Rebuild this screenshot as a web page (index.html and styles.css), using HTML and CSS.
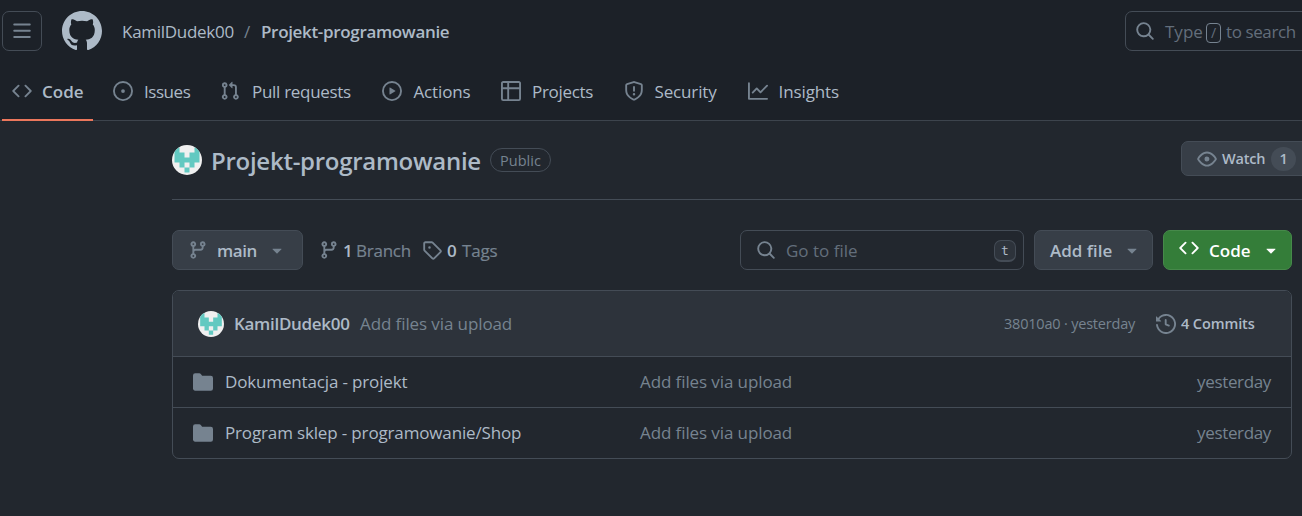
FILE: index.html
```
<!DOCTYPE html>
<html lang="en">
<head>
<meta charset="utf-8">
<title>KamilDudek00/Projekt-programowanie</title>
<link rel="stylesheet" href="styles.css">
</head>
<body>
<svg class="defs" width="0" height="0">
  <symbol id="i-branch" viewBox="0 0 16 16"><path d="M9.5 3.25a2.25 2.25 0 1 1 3 2.122V6A2.5 2.5 0 0 1 10 8.5H6a1 1 0 0 0-1 1v1.128a2.251 2.251 0 1 1-1.5 0V5.372a2.25 2.25 0 1 1 1.5 0v1.836A2.493 2.493 0 0 1 6 7h4a1 1 0 0 0 1-1v-.628A2.25 2.25 0 0 1 9.5 3.25Zm-6 0a.75.75 0 1 0 1.5 0 .75.75 0 0 0-1.5 0Zm8.25-.75a.75.75 0 1 0 0 1.5.75.75 0 0 0 0-1.5ZM4.25 12a.75.75 0 1 0 0 1.5.75.75 0 0 0 0-1.5Z"/></symbol>
  <symbol id="i-code" viewBox="0 0 16 16"><path d="m11.28 3.22 4.25 4.25a.75.75 0 0 1 0 1.06l-4.25 4.25a.749.749 0 0 1-1.275-.326.749.749 0 0 1 .215-.734L13.94 8l-3.72-3.72a.749.749 0 0 1 .326-1.275.749.749 0 0 1 .734.215Zm-6.56 0a.751.751 0 0 1 1.042.018.751.751 0 0 1 .018 1.042L2.06 8l3.72 3.72a.749.749 0 0 1-.326 1.275.749.749 0 0 1-.734-.215L.47 8.53a.75.75 0 0 1 0-1.06Z"/></symbol>
  <symbol id="i-search" viewBox="0 0 16 16"><path d="M10.68 11.74a6 6 0 0 1-7.922-8.982 6 6 0 0 1 8.982 7.922l3.04 3.04a.749.749 0 0 1-.326 1.275.749.749 0 0 1-.734-.215ZM11.5 7a4.499 4.499 0 1 0-8.997 0A4.499 4.499 0 0 0 11.5 7Z"/></symbol>
  <symbol id="i-caret" viewBox="0 0 16 16"><path d="m4.427 7.427 3.396 3.396a.25.25 0 0 0 .354 0l3.396-3.396A.25.25 0 0 0 11.396 7H4.604a.25.25 0 0 0-.177.427Z"/></symbol>
  <symbol id="i-folder" viewBox="0 0 16 16"><path d="M1.75 1A1.75 1.75 0 0 0 0 2.75v10.5C0 14.216.784 15 1.75 15h12.5A1.75 1.75 0 0 0 16 13.25v-8.5A1.75 1.75 0 0 0 14.25 3H7.5a.25.25 0 0 1-.2-.1l-.9-1.2C6.07 1.26 5.55 1 5 1H1.75Z"/></symbol>
  <symbol id="i-avatar" viewBox="0 0 30 30"><rect width="30" height="30" fill="#f0f0f0"/><path fill="#62c9c1" d="M2.500 2.500h5v5h5v5h5v-5h5v-5h5v15h-5v5h-5v-5h-5v5h-5v-5h-5zM12.500 22.500h5v5h-5z"/></symbol>
</svg>

<header class="top">
  <div class="global">
    <button class="menu" aria-label="Menu"><svg class="ic" viewBox="0 0 16 16"><path d="M1 2.75A.75.75 0 0 1 1.75 2h12.5a.75.75 0 0 1 0 1.500H1.750A.75.75 0 0 1 1 2.750Zm0 5A.75.75 0 0 1 1.750 7h12.500a.75.75 0 0 1 0 1.500H1.750A.75.75 0 0 1 1 7.750ZM1.750 12h12.500a.75.75 0 0 1 0 1.500H1.750a.75.75 0 0 1 0-1.500Z"/></svg></button>
    <svg class="logo" viewBox="0 0 16 16"><path d="M8 0c4.42 0 8 3.58 8 8a8.013 8.013 0 0 1-5.45 7.590c-.4.080-.55-.170-.55-.380 0-.270.010-1.130.010-2.200 0-.750-.250-1.230-.540-1.480 1.780-.200 3.650-.880 3.650-3.950 0-.880-.310-1.590-.820-2.150.080-.200.360-1.020-.080-2.120 0 0-.670-.220-2.200.820-.640-.180-1.320-.270-2-.270-.680 0-1.360.090-2 .270-1.530-1.030-2.200-.820-2.200-.820-.440 1.100-.160 1.920-.080 2.120-.510.560-.820 1.280-.820 2.150 0 3.060 1.860 3.750 3.640 3.950-.230.200-.440.550-.510 1.070-.460.210-1.610.550-2.330-.660-.150-.240-.600-.830-1.230-.820-.670.010-.270.380.010.530.340.190.730.900.820 1.130.160.450.680 1.310 2.690.940 0 .670.010 1.300.010 1.490 0 .210-.150.450-.550.380A7.995 7.995 0 0 1 0 8c0-4.420 3.580-8 8-8Z"/></svg>
    <nav class="crumbs"><span class="owner">KamilDudek00</span><span class="slash">/</span><b class="repo">Projekt-programowanie</b></nav>
    <div class="search"><svg class="ic"><use href="#i-search"/></svg><span class="s1">Type</span><kbd class="key-slash">/</kbd><span class="s2">to search</span></div>
  </div>
  <nav class="tabs">
    <a class="tab active"><svg class="ic"><use href="#i-code"/></svg><span class="t-code">Code</span></a>
    <a class="tab"><svg class="ic" viewBox="0 0 16 16"><path d="M8 9.500a1.500 1.500 0 1 0 0-3 1.500 1.500 0 0 0 0 3Z"/><path d="M8 0a8 8 0 1 1 0 16A8 8 0 0 1 8 0ZM1.500 8a6.500 6.500 0 1 0 13 0 6.500 6.500 0 0 0-13 0Z"/></svg><span class="t-issues">Issues</span></a>
    <a class="tab"><svg class="ic" viewBox="0 0 16 16"><path d="M1.500 3.250a2.250 2.250 0 1 1 3 2.122v5.256a2.251 2.251 0 1 1-1.500 0V5.372A2.250 2.250 0 0 1 1.500 3.250Zm5.677-.177L9.573.677A.250.250 0 0 1 10 .854V2.500h1A2.500 2.500 0 0 1 13.500 5v5.628a2.251 2.251 0 1 1-1.500 0V5a1 1 0 0 0-1-1h-1v1.646a.250.250 0 0 1-.427.177L7.177 3.427a.250.250 0 0 1 0-.354ZM3.750 2.500a.750.750 0 1 0 0 1.500.750.750 0 0 0 0-1.500Zm0 9.500a.750.750 0 1 0 0 1.500.750.750 0 0 0 0-1.500Zm8.250.750a.750.750 0 1 0 1.500 0 .750.750 0 0 0-1.500 0Z"/></svg><span class="t-pulls">Pull requests</span></a>
    <a class="tab"><svg class="ic" viewBox="0 0 16 16"><path d="M8 0a8 8 0 1 1 0 16A8 8 0 0 1 8 0ZM1.500 8a6.500 6.500 0 1 0 13 0 6.500 6.500 0 0 0-13 0Zm4.879-2.773 4.264 2.559a.250.250 0 0 1 0 .428l-4.264 2.559A.250.250 0 0 1 6 10.559V5.442a.250.250 0 0 1 .379-.215Z"/></svg><span class="t-actions">Actions</span></a>
    <a class="tab"><svg class="ic" viewBox="0 0 16 16"><path d="M0 1.750C0 .784.784 0 1.750 0h12.500C15.216 0 16 .784 16 1.750v12.500A1.750 1.750 0 0 1 14.250 16H1.750A1.750 1.750 0 0 1 0 14.250ZM6.500 6.500v8h7.750a.250.250 0 0 0 .250-.250V6.500Zm8-1.500V1.750a.250.250 0 0 0-.250-.250H6.500V5Zm-13 1.500v7.750c0 .138.112.250.250.250H5v-8ZM5 5V1.500H1.750a.250.250 0 0 0-.250.250V5Z"/></svg><span class="t-projects">Projects</span></a>
    <a class="tab"><svg class="ic" viewBox="0 0 16 16"><path d="M7.467.133a1.748 1.748 0 0 1 1.066 0l5.250 1.680A1.750 1.750 0 0 1 15 3.480V7c0 1.566-.320 3.182-1.303 4.682-.983 1.498-2.585 2.813-5.032 3.855a1.697 1.697 0 0 1-1.330 0c-2.447-1.042-4.049-2.357-5.032-3.855C1.320 10.182 1 8.566 1 7V3.480a1.750 1.750 0 0 1 1.217-1.667Zm.610 1.429a.250.250 0 0 0-.153 0l-5.250 1.680a.250.250 0 0 0-.174.238V7c0 1.358.275 2.666 1.057 3.860.784 1.194 2.121 2.340 4.366 3.297a.196.196 0 0 0 .154 0c2.245-.956 3.582-2.104 4.366-3.298C13.225 9.666 13.500 8.360 13.500 7V3.480a.251.251 0 0 0-.174-.237l-5.250-1.680ZM8.750 4.750v3a.750.750 0 0 1-1.500 0v-3a.750.750 0 0 1 1.500 0ZM9 10.500a1 1 0 1 1-2 0 1 1 0 0 1 2 0Z"/></svg><span class="t-security">Security</span></a>
    <a class="tab"><svg class="ic" viewBox="0 0 16 16"><path d="M1.500 1.750V13.500h13.750a.750.750 0 0 1 0 1.500H.750a.750.750 0 0 1-.750-.750V1.750a.750.750 0 0 1 1.500 0Zm14.280 2.530-5.250 5.250a.750.750 0 0 1-1.060 0L7 7.060 4.280 9.780a.751.751 0 0 1-1.042-.018.751.751 0 0 1-.018-1.042l3.250-3.250a.750.750 0 0 1 1.060 0L10 7.940l4.720-4.720a.751.751 0 0 1 1.042.018.751.751 0 0 1 .018 1.042Z"/></svg><span class="t-insights">Insights</span></a>
  </nav>
</header>

<main class="page">
  <section class="title">
    <svg class="avatar big"><use href="#i-avatar"/></svg>
    <h1 class="name">Projekt-programowanie</h1>
    <span class="public">Public</span>
    <button class="watch"><svg class="ic" viewBox="0 0 16 16"><path d="M8 2c1.981 0 3.671.992 4.933 2.078 1.270 1.091 2.187 2.345 2.637 3.023a1.620 1.620 0 0 1 0 1.798c-.450.678-1.367 1.932-2.637 3.023C11.670 13.008 9.981 14 8 14c-1.981 0-3.671-.992-4.933-2.078C1.797 10.830.880 9.576.430 8.898a1.620 1.620 0 0 1 0-1.798c.450-.677 1.367-1.931 2.637-3.022C4.330 2.992 6.019 2 8 2ZM1.679 7.932a.120.120 0 0 0 0 .136c.411.622 1.241 1.750 2.366 2.717C5.176 11.758 6.527 12.500 8 12.500c1.473 0 2.825-.742 3.955-1.715 1.124-.967 1.954-2.096 2.366-2.717a.120.120 0 0 0 0-.136c-.412-.621-1.242-1.750-2.366-2.717C10.824 4.242 9.473 3.500 8 3.500c-1.473 0-2.825.742-3.955 1.715-1.124.967-1.954 2.096-2.366 2.717ZM8 10a2 2 0 1 1-.001-3.999A2 2 0 0 1 8 10Z"/></svg><span class="watch-t">Watch</span><span class="count">1</span></button>
  </section>

  <section class="bar">
    <button class="btn branch"><svg class="ic"><use href="#i-branch"/></svg><span class="main-t">main</span><svg class="ic"><use href="#i-caret"/></svg></button>
    <a class="stat branches"><svg class="ic"><use href="#i-branch"/></svg><b>1</b><span class="branch-t">Branch</span></a>
    <a class="stat tags"><svg class="ic" viewBox="0 0 16 16"><path d="M1 7.775V2.750C1 1.784 1.784 1 2.750 1h5.025c.464 0 .910.184 1.238.513l6.250 6.250a1.750 1.750 0 0 1 0 2.474l-5.026 5.026a1.750 1.750 0 0 1-2.474 0l-6.250-6.250A1.752 1.752 0 0 1 1 7.775Zm1.500 0c0 .066.026.130.073.177l6.250 6.250a.250.250 0 0 0 .354 0l5.025-5.025a.250.250 0 0 0 0-.354l-6.250-6.250a.250.250 0 0 0-.177-.073H2.750a.250.250 0 0 0-.250.250ZM6 5a1 1 0 1 1 0 2 1 1 0 0 1 0-2Z"/></svg><b>0</b><span class="tags-t">Tags</span></a>
    <div class="goto"><svg class="ic"><use href="#i-search"/></svg><span class="goto-t">Go to file</span><kbd class="key-t">t</kbd></div>
    <button class="btn add"><span class="add-t">Add file</span><svg class="ic"><use href="#i-caret"/></svg></button>
    <button class="btn green"><svg class="ic up"><use href="#i-code"/></svg><span class="code-t">Code</span><svg class="ic"><use href="#i-caret"/></svg></button>
  </section>

  <section class="files">
    <div class="commit">
      <svg class="avatar small" viewBox="0 0 30 30"><use href="#i-avatar" width="30" height="30"/></svg>
      <b class="author">KamilDudek00</b><span class="msg">Add files via upload</span>
      <span class="sha">38010a0 · yesterday</span>
      <svg class="ic" viewBox="0 0 16 16"><path d="m.427 1.927 1.215 1.215a8.002 8.002 0 1 1-1.600 5.685.750.750 0 1 1 1.493-.154 6.500 6.500 0 1 0 1.180-4.458l1.358 1.358A.250.250 0 0 1 3.896 6H.250A.250.250 0 0 1 0 5.750V2.104a.250.250 0 0 1 .427-.177ZM7.750 4a.750.750 0 0 1 .750.750v2.992l2.028.812a.750.750 0 0 1-.557 1.392l-2.500-1A.751.751 0 0 1 7 8.250v-3.500A.750.750 0 0 1 7.750 4Z"/></svg>
      <b class="commits">4 Commits</b>
    </div>
    <div class="row"><svg class="ic"><use href="#i-folder"/></svg><span class="file">Dokumentacja - projekt</span><span class="msg">Add files via upload</span><span class="when">yesterday</span></div>
    <div class="row"><svg class="ic"><use href="#i-folder"/></svg><span class="file">Program sklep - programowanie/Shop</span><span class="msg">Add files via upload</span><span class="when">yesterday</span></div>
  </section>
</main>
</body>
</html>
```

FILE: styles.css
```
* { box-sizing: border-box; }
body { margin: 0; height: 516px; overflow: hidden; background: #22272e; color: #adbac7; font: 17px/26px "Open Sans", "Noto Sans", sans-serif; white-space: nowrap; }
button, kbd { font: inherit; color: inherit; margin: 0; padding: 0; }
b { font-weight: 600; }
svg { flex: none; fill: currentColor; }
.defs { position: absolute; }
.ic { width: 20px; height: 20px; color: #768390; }

.top { background: #1c2128; height: 121px; border-bottom: 1px solid #3d444d; }
.global { display: flex; align-items: center; height: 51px; padding: 11px 0 0 2px; }
.menu { width: 40px; height: 40px; display: grid; place-items: center; background: none; border: 1px solid #444c56; border-radius: 7px; margin-right: 20px; }
.logo { width: 40px; height: 40px; margin-right: 20px; }
.crumbs { display: flex; padding-top: 2px; }
.owner { width: 122px; letter-spacing: -.28px; }
.slash { width: 17px; color: #768390; }
.repo { letter-spacing: -.33px; }
.search { display: flex; align-items: center; width: 200px; height: 40px; margin-left: auto; margin-right: -23px; padding-left: 9px; border: 1px solid #444c56; border-radius: 7px; color: #636e7b; }
.s1 { width: 41px; margin-left: 10px; padding-top: 2px; }
.key-slash { width: 15px; height: 20px; border: 1px solid #768390; border-radius: 4px; font-size: 14px; line-height: 18px; text-align: center; margin: 3px 5px 0 0; }
.s2 { padding-top: 2px; letter-spacing: -.4px; }

.tabs { display: flex; gap: 10px; height: 70px; padding-left: 2px; }
.tab { display: flex; align-items: center; gap: 10px; padding: 12px 10px 0; height: 70px; border-bottom: 2px solid transparent; }
.tab span { padding-top: 1px; }
.active { font-weight: 600; border-bottom-color: #ec775c; }
.t-code { width: 41px; }
.t-issues { width: 47px; padding-left: 1px; letter-spacing: -.45px; }
.t-pulls { width: 101.500px; padding-left: 2px; letter-spacing: -.3px; }
.t-actions { width: 59.500px; padding-left: 2px; letter-spacing: -.15px; }
.t-projects { width: 62.500px; padding-left: 1px; letter-spacing: -.3px; }
.t-security { width: 64px; padding-left: 1px; letter-spacing: -.15px; }
.t-insights { padding-left: 1px; letter-spacing: -.1px; }

.page { padding-left: 172px; }
.title { display: flex; align-items: center; height: 79px; border-bottom: 1px solid #444c56; }
.avatar { border-radius: 50%; }
.big { width: 30px; height: 30px; margin-right: 9px; }
.name { margin: 1px 0 0; width: 279px; font-size: 24px; line-height: 32px; font-weight: 600; letter-spacing: -.27px; }
.public { width: 61px; height: 24px; border: 1px solid #444c56; border-radius: 12px; color: #768390; font-size: 14.500px; line-height: 23px; text-align: center; }
.watch { display: flex; align-items: center; width: 140px; height: 35px; margin: -3px -19px 0 auto; padding-left: 15px; background: #373e47; border: 1px solid #444c56; border-radius: 7px; font-size: 14.500px; font-weight: 600; letter-spacing: -.2px; }
.watch-t { width: 49px; margin-left: 5px; text-align: left; }
.count { width: 25px; height: 24px; border-radius: 12px; background: #444c56; line-height: 24px; }

.bar { display: flex; height: 40px; margin: 30px 10px 20px 0; }
.bar span, .stat b { padding-top: 1px; }
.btn { display: flex; align-items: center; height: 40px; background: #373e47; border: 1px solid #444c56; border-radius: 7px; font-weight: 600; text-align: left; }
.branch { width: 131px; padding-left: 15px; margin-right: 16px; }
.main-t { width: 50px; margin-left: 9px; letter-spacing: -.4px; }
.stat { display: flex; align-items: center; color: #768390; }
.stat span { -webkit-text-stroke: .2px; }
.stat b { width: 13px; color: #adbac7; margin-left: 4px; }
.branches { width: 103px; }
.branch-t { letter-spacing: -.25px; }
.stat.tags b { width: 15px; margin-left: 5px; }
.tags-t { letter-spacing: -.2px; }
.goto { display: flex; align-items: center; width: 284px; margin-left: auto; padding: 0 7px 0 15px; border: 1px solid #444c56; border-radius: 7px; color: #636e7b; }
.goto-t { margin-left: 10px; }
.key-t { margin-left: auto; margin-top: 2px; width: 22px; height: 22px; border: 1px solid #444c56; border-bottom-width: 2px; border-radius: 7px; background: #2d333b; color: #adbac7; font: 13px/20px "DejaVu Sans Mono", monospace; text-align: center; }
.add { width: 119px; margin-left: 10px; padding-left: 15px; }
.add-t { width: 72px; }
.green { width: 129px; margin-left: 10px; padding-left: 15px; background: #347d39; border-color: #46894a; color: #fff; }
.green .ic { color: #fff; }
.up { margin-top: -4px; }
.code-t { width: 52px; margin-left: 10px; }

.files { width: 1120px; border: 1px solid #444c56; border-radius: 7px; overflow: hidden; }
.commit { display: flex; align-items: center; height: 65px; padding: 0 24px 0 25px; background: #2d333b; }
.small { width: 26px; height: 26px; margin-right: 10px; }
.author { width: 126px; letter-spacing: -.3px; }
.msg { color: #768390; letter-spacing: -.1px; }
.sha { margin-left: auto; width: 152px; font-size: 14.500px; color: #768390; letter-spacing: -.2px; }
.commits { width: 86px; margin-left: 5px; font-size: 14.500px; letter-spacing: -.1px; }
.row { display: flex; align-items: center; height: 51px; border-top: 1px solid #444c56; padding: 0 20px; }
.file { width: 415px; margin-left: 12px; letter-spacing: -.15px; }
.when { margin-left: auto; color: #768390; letter-spacing: -.35px; }
```
